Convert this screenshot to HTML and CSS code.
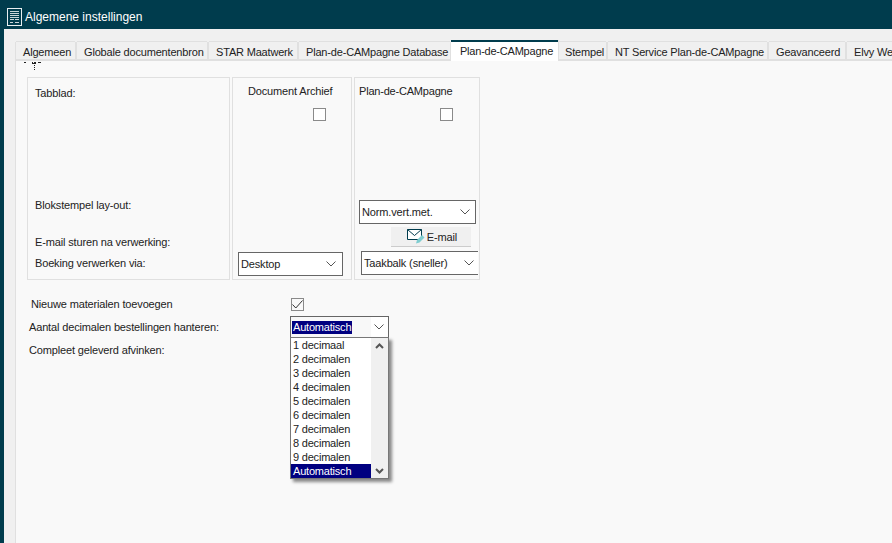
FILE: index.html
```html
<!DOCTYPE html>
<html lang="nl">
<head>
    <meta charset="UTF-8">
    <title>Algemene instellingen</title>
    <link rel="stylesheet" href="styles.css">
</head>
<body>
    <div class="window">
        <!-- titelbalk -->
        <div class="title-bar">
            <svg class="title-icon" width="16" height="18" viewBox="0 0 16 18">
                <rect x="0.5" y="0.5" width="14" height="17" fill="#003c4d" stroke="#e8eef0"/>
                <path d="M3 3.500h9M3 5.500h9M3 7.500h9M3 9.500h9M3 11.500h4M8 11.500h4M3 14.500h3M8 14.500h4" stroke="#c8d4d8" stroke-width="1"/>
            </svg>
            <div class="title-text">Algemene instellingen</div>
        </div>

        <div class="window-body">
            <!-- tabbladen -->
            <div class="tabs">
                <div class="tab tab-algemeen">Algemeen</div>
                <div class="tab tab-globale">Globale documentenbron</div>
                <div class="tab tab-star">STAR Maatwerk</div>
                <div class="tab tab-database">Plan-de-CAMpagne Database</div>
                <div class="tab tab-active">Plan-de-CAMpagne</div>
                <div class="tab tab-stempel">Stempel</div>
                <div class="tab tab-service">NT Service Plan-de-CAMpagne</div>
                <div class="tab tab-geavanceerd">Geavanceerd</div>
                <div class="tab tab-elvy">Elvy Web</div>
            </div>

            <div class="tab-panel">
                <svg class="grip" width="20" height="10" viewBox="0 0 20 10">
                    <path d="M1 1h2v1H1zM9 1h1v1H9zM11 1h2v2h-2zM9 2h2v1H9zM15 1h3v1h-3zM11 4h1v1h-1zM11 6h1v1h-1zM11 8h1v1h-1z" fill="#222"/>
                </svg>

                <div class="groups">
                    <div class="group group-labels">
                        <div class="label label-tabblad">Tabblad:</div>
                        <div class="label label-blok">Blokstempel lay-out:</div>
                        <div class="label label-email">E-mail sturen na verwerking:</div>
                        <div class="label label-boeking">Boeking verwerken via:</div>
                    </div>

                    <div class="group group-archief">
                        <div class="group-title">Document Archief</div>
                        <div class="checkbox checkbox-archief"></div>
                        <div class="select select-desktop">
                            <span>Desktop</span>
                            <svg class="chevron" width="10" height="6" viewBox="0 0 10 6"><path d="M0.5 0.5L5 5L9.5 0.5" fill="none" stroke="#555"/></svg>
                        </div>
                    </div>

                    <div class="group group-campagne">
                        <div class="group-title group-title-left">Plan-de-CAMpagne</div>
                        <div class="checkbox checkbox-campagne"></div>
                        <div class="select select-norm">
                            <span>Norm.vert.met.</span>
                            <svg class="chevron" width="10" height="6" viewBox="0 0 10 6"><path d="M0.5 0.5L5 5L9.5 0.5" fill="none" stroke="#555"/></svg>
                        </div>
                        <div class="mail-btn">
                            <svg width="18" height="15" viewBox="0 0 18 15">
                                <path d="M0.500 0.500h14v10h-14z" fill="#fff" stroke="#003c4d" stroke-width="1"/>
                                <path d="M0.500 0.500L7.500 6.500L14.500 0.500" fill="none" stroke="#003c4d"/>
                                <path d="M9 14.500L10 11L15 6L17.500 8.500L12.500 13.500z" fill="#7fcdd0"/>
                            </svg>
                            <span>E-mail</span>
                        </div>
                        <div class="select select-taakbalk">
                            <span>Taakbalk (sneller)</span>
                            <svg class="chevron" width="10" height="6" viewBox="0 0 10 6"><path d="M0.5 0.5L5 5L9.5 0.5" fill="none" stroke="#555"/></svg>
                        </div>
                    </div>
                </div>

                <!-- opties onder de groepen -->
                <div class="options">
                    <div class="option-row option-materialen">
                        <div class="label option-label-indent">Nieuwe materialen toevoegen</div>
                        <div class="checkbox checkbox-checked">
                            <svg width="11" height="9" viewBox="0 0 11 9"><path d="M0.500 4.500L3.800 8L10.500 0.500" fill="none" stroke="#333" stroke-width="1"/></svg>
                        </div>
                    </div>
                    <div class="option-row option-decimalen">
                        <div class="label">Aantal decimalen bestellingen hanteren:</div>
                        <div class="select select-auto">
                            <span class="selected-text">Automatisch</span>
                            <svg class="chevron" width="10" height="6" viewBox="0 0 10 6"><path d="M0.5 0.5L5 5L9.5 0.5" fill="none" stroke="#555"/></svg>
                            <div class="dropdown">
                                <div class="dropdown-list">
                                    <div class="dropdown-item">1 decimaal</div>
                                    <div class="dropdown-item">2 decimalen</div>
                                    <div class="dropdown-item">3 decimalen</div>
                                    <div class="dropdown-item">4 decimalen</div>
                                    <div class="dropdown-item">5 decimalen</div>
                                    <div class="dropdown-item">6 decimalen</div>
                                    <div class="dropdown-item">7 decimalen</div>
                                    <div class="dropdown-item">8 decimalen</div>
                                    <div class="dropdown-item">9 decimalen</div>
                                    <div class="dropdown-item dropdown-item-active">Automatisch</div>
                                </div>
                                <div class="scrollbar">
                                    <svg width="9" height="6" viewBox="0 0 9 6"><path d="M1 5L4.500 1.500L8 5" fill="none" stroke="#555" stroke-width="2"/></svg>
                                    <svg width="9" height="6" viewBox="0 0 9 6"><path d="M1 1L4.500 4.500L8 1" fill="none" stroke="#555" stroke-width="2"/></svg>
                                </div>
                            </div>
                        </div>
                    </div>
                    <div class="label option-compleet">Compleet geleverd afvinken:</div>
                </div>
            </div>
        </div>
    </div>
</body>
</html>
```

FILE: styles.css
```css
* {
    margin: 0;
    padding: 0;
    box-sizing: border-box;
}

body {
    width: 892px;
    height: 543px;
    font-family: "Liberation Sans", Arial, sans-serif;
    font-size: 11px;
    letter-spacing: -0.15px;
    color: #222;
    background: #003c4d;
    overflow: hidden;
}

.window {
    height: 100%;
    display: flex;
    flex-direction: column;
}

.title-bar {
    height: 29px;
    flex-shrink: 0;
    padding: 8px 0 0 7px;
    display: flex;
    align-items: flex-start;
    gap: 2px;
    color: #fff;
}

.title-text {
    font-size: 12px;
    letter-spacing: 0;
    line-height: 18px;
}

.window-body {
    flex: 1;
    margin-left: 4px;
    background: #f0f0f0;
    padding: 11px 0 0 11px;
    display: flex;
    flex-direction: column;
    min-height: 0;
}

/* tabbladen */
.tabs {
    height: 21px;
    flex-shrink: 0;
    display: flex;
    align-items: flex-end;
    padding-left: 1px;
    white-space: nowrap;
    overflow: hidden;
    position: relative;
    z-index: 1;
}

.tab {
    height: 19px;
    margin-right: 2px;
    padding: 4px 0 0 7px;
    background: #f0f0f0;
    border-bottom: 2px solid #e0e0e0;
    box-shadow: 1px 0 0 #e0e0e0, -1px 0 0 #e0e0e0, 0 -1px 0 #e0e0e0;
    line-height: 13px;
    flex-shrink: 0;
    letter-spacing: -0.18px;
}

.tab-algemeen { width: 59px; }
.tab-globale { width: 130px; }
.tab-star { width: 88px; }
.tab-database { width: 151px; margin-right: 1px; }
.tab-stempel { width: 47px; padding-left: 6px; }
.tab-service { width: 159px; }
.tab-geavanceerd { width: 76px; }
.tab-elvy { width: 60px; margin-right: 0; }

.tab-active {
    width: 107px;
    height: 23px;
    margin-right: 1px;
    margin-bottom: -2px;
    align-self: flex-end;
    background: #fff;
    border-top: 2px solid #003c4d;
    border-bottom: none;
    box-shadow: 1px 0 0 #e0e0e0;
    padding: 3px 0 0 9px;
    letter-spacing: -0.22px;
}

.tab-panel {
    flex: 1;
    position: relative;
    background: #f9f9f9;
    border-left: 1px solid #e0e0e0;
    padding: 16px 0 0 11px;
}

.grip {
    position: absolute;
    left: 7px;
    top: 0;
}

/* groepen */
.groups {
    display: flex;
    gap: 2px;
    height: 203px;
}

.group {
    height: 100%;
    border: 1px solid #e0e0e0;
    display: flex;
    flex-direction: column;
}

.group-labels {
    width: 203px;
    padding: 9px 0 0 7px;
}

.group-archief {
    width: 120px;
    padding: 7px 0 0 5px;
}

.group-campagne {
    width: 126px;
    padding: 7px 0 0 4px;
}

.group-title {
    line-height: 13px;
    padding-left: 10px;
}

.group-title-left {
    padding-left: 0;
    letter-spacing: -0.2px;
}

.label {
    line-height: 13px;
}

.label-blok { margin-top: 99px; }
.label-email { margin-top: 24px; }
.label-boeking { margin-top: 8px; }

.checkbox {
    width: 13px;
    height: 13px;
    border: 1px solid #8a8a8a;
    background: #fff;
    display: flex;
    align-items: center;
    justify-content: center;
    flex-shrink: 0;
}

.checkbox-archief { margin: 10px 0 0 75px; }
.checkbox-campagne { margin: 10px 0 0 81px; }

.checkbox-checked {
    background: #f9f9f9;
}

.select {
    height: 24px;
    border: 1px solid #666;
    background: #fff;
    display: flex;
    align-items: center;
    justify-content: space-between;
    padding: 0 3px 0 2px;
    position: relative;
}

.chevron {
    margin-right: 1px;
}

.select-desktop {
    width: 105px;
    margin-top: 131px;
    padding-right: 5px;
}

.select-norm {
    width: 117px;
    margin-top: 79px;
    padding-right: 4px;
}

.select-taakbalk {
    width: 117px;
    margin: 4px 0 0 2px;
    border-right: none;
    padding-right: 3px;
}

.mail-btn {
    width: 80px;
    height: 20px;
    margin: 3px 0 0 32px;
    padding-left: 2px;
    background: #f0f0f0;
    border-bottom: 1px solid #ccc;
    display: flex;
    align-items: center;
    justify-content: center;
    gap: 2px;
}

/* opties */
.options {
    padding: 17px 0 0 2px;
}

.option-row {
    display: flex;
    align-items: center;
}

.option-materialen {
    height: 15px;
}

.option-label-indent {
    width: 262px;
    padding-left: 2px;
}

.option-decimalen {
    margin-top: 4px;
    height: 22px;
}

.option-decimalen .label {
    width: 261px;
}

.select-auto {
    width: 99px;
    height: 22px;
    padding-left: 1px;
    background: linear-gradient(to right, #f8f8f8 80px, #fff 80px);
}

.selected-text {
    background: #000080;
    color: #fff;
    line-height: 13px;
    padding: 0 1px;
    letter-spacing: -0.2px;
}

.option-compleet {
    margin-top: 6px;
}

.dropdown {
    position: absolute;
    left: -1px;
    top: 20px;
    width: 99px;
    height: 142px;
    background: #fff;
    border: 1px solid #777;
    box-shadow: 3px 3px 3px rgba(0, 0, 0, 0.45);
    display: flex;
    z-index: 2;
}

.dropdown-list {
    width: 80px;
}

.dropdown-item {
    height: 14px;
    line-height: 14px;
    padding-left: 2px;
    white-space: nowrap;
    letter-spacing: -0.2px;
}

.dropdown-item-active {
    background: #000080;
    color: #fff;
}

.scrollbar {
    flex: 1;
    background: #f0f0f0;
    display: flex;
    flex-direction: column;
    align-items: center;
    justify-content: space-between;
    padding: 5px 0 4px;
}
```
